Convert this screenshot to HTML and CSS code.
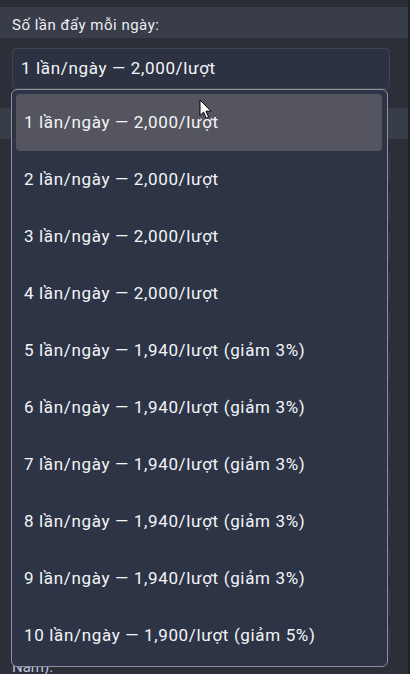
FILE: index.html
```html
<!DOCTYPE html>
<html lang="vi">
<head>
<meta charset="utf-8">
<title>Số lần đẩy</title>
<link rel="stylesheet" href="styles.css">
</head>
<body>
<div class="page">
  <div class="topbar"></div>
  <div class="label-row">Số lần đẩy mỗi ngày:</div>
  <div class="select-wrap">
    <div class="select">1 lần/ngày — 2,000/lượt</div>
  </div>
  <div class="band"></div>
  <div class="under-list">
    <div class="under-box"></div>
    <div class="under-box"></div>
    <div class="under-box"></div>
    <div class="under-box"></div>
    <div class="under-box"></div>
    <div class="under-box"></div>
    <div class="under-box"></div>
    <div class="under-box"></div>
    <div class="under-box"></div>
    <div class="under-box"></div>
    <div class="under-box"></div>
    <div class="under-box"></div>
    <div class="under-box"></div>
  </div>
  <div class="under-label">Nam):</div>

  <ul class="dropdown">
    <li class="opt active">1 lần/ngày — 2,000/lượt</li>
    <li class="opt">2 lần/ngày — 2,000/lượt</li>
    <li class="opt">3 lần/ngày — 2,000/lượt</li>
    <li class="opt">4 lần/ngày — 2,000/lượt</li>
    <li class="opt">5 lần/ngày — 1,940/lượt (giảm 3%)</li>
    <li class="opt">6 lần/ngày — 1,940/lượt (giảm 3%)</li>
    <li class="opt">7 lần/ngày — 1,940/lượt (giảm 3%)</li>
    <li class="opt">8 lần/ngày — 1,940/lượt (giảm 3%)</li>
    <li class="opt">9 lần/ngày — 1,940/lượt (giảm 3%)</li>
    <li class="opt">10 lần/ngày — 1,900/lượt (giảm 5%)</li>
  </ul>

  <svg class="cursor" width="14" height="21" viewBox="0 0 14 21">
    <path d="M1 1 L1 16.5 L4.6 13 L7.3 19.2 L9.6 18.2 L7 12.2 L12 12.2 Z" fill="#ffffff" stroke="#000000" stroke-width="1" stroke-linejoin="miter"/>
  </svg>
  <div class="scroll-edge"></div>
</div>
</body>
</html>
```

FILE: styles.css
```css
html, body {
  margin: 0;
  padding: 0;
  background: #2d2f38;
}
body {
  font-family: Roboto, "Noto Sans", "Liberation Sans", sans-serif;
  color: #eceef2;
  width: 410px;
  height: 674px;
  overflow: hidden;
}
.page {
  position: relative;
  width: 410px;
  height: 674px;
  overflow: hidden;
  background: #2d2f38;
}
.topbar {
  height: 7px;
  background: #2b2d35;
}
.label-row {
  height: 31px;
  background: #393c49;
  padding-left: 12px;
  box-sizing: border-box;
  font-size: 15px;
  letter-spacing: 0.5px;
  line-height: 31px;
  padding-top: 3px;
  color: #eceef2;
}
.select-wrap {
  padding: 10px 20px 0 12px;
}
.select {
  height: 41px;
  box-sizing: border-box;
  border: 1px solid #40454f;
  border-radius: 4px;
  background: #2c3242;
  padding-left: 8px;
  font-size: 17px;
  letter-spacing: 0.65px;
  line-height: 39px;
  color: #f4f5f7;
}
.band {
  margin-top: 19px;
  height: 31px;
  background: #393c49;
}
.under-list {
  display: flex;
  flex-direction: column;
  gap: 9.5px;
  padding: 13px 20px 0 12px;
}
.under-box {
  height: 28px;
  border: 1px solid #3b3f4b;
  border-radius: 4px;
}
.under-label {
  position: absolute;
  left: 12px;
  top: 658px;
  font-size: 15px;
  color: #b9c3dc;
}
.dropdown {
  position: absolute;
  left: 11px;
  top: 89px;
  width: 377px;
  height: 578px;
  box-sizing: border-box;
  margin: 0;
  padding: 4px 5px 2px 4px;
  list-style: none;
  background: #2d3446;
  border: 1px solid #8b909b;
  border-radius: 6px;
}
.opt {
  height: 57px;
  padding-left: 8px;
  font-size: 17px;
  letter-spacing: 0.65px;
  line-height: 57px;
  color: #f4f5f7;
  border-radius: 4px;
  white-space: nowrap;
}
.opt.active {
  background: #54555f;
}
.cursor {
  position: absolute;
  left: 199px;
  top: 99px;
}
.scroll-edge {
  position: absolute;
  right: 0;
  top: 0;
  width: 2px;
  height: 674px;
  background: #1f2026;
}
```
